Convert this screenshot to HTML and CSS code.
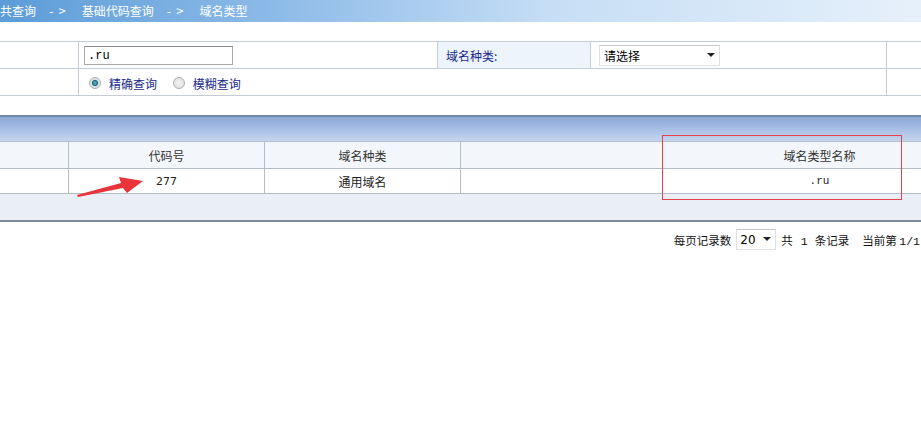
FILE: index.html
```html
<!DOCTYPE html>
<html lang="zh-CN">
<head>
    <meta charset="UTF-8">
    <title>域名类型</title>
    <link rel="stylesheet" href="styles.css">
</head>
<body>
<div class="page">
    <div class="crumb">
        <span>共查询</span><span class="sep">-&gt;</span><span>基础代码查询</span><span class="sep">-&gt;</span><span>域名类型</span>
    </div>

    <table class="search">
        <colgroup>
            <col style="width:79px">
            <col style="width:359px">
            <col style="width:153px">
            <col style="width:296px">
            <col style="width:80px">
        </colgroup>
        <tr>
            <td class="label"></td>
            <td><input type="text" class="text" value=".ru"></td>
            <td class="label name">域名种类:</td>
            <td>
                <span class="sel wide"><select><option>请选择</option></select></span>
            </td>
            <td></td>
        </tr>
        <tr>
            <td class="label"></td>
            <td colspan="3" class="mode">
                <input type="radio" name="mode" class="radio" checked><label>精确查询</label>
                <input type="radio" name="mode" class="radio"><label>模糊查询</label>
            </td>
            <td></td>
        </tr>
    </table>

    <div class="grid">
        <div class="grid-bar"></div>
        <table class="list">
            <colgroup>
                <col style="width:69px">
                <col style="width:196px">
                <col style="width:196px">
                <col style="width:718px">
            </colgroup>
            <tr class="head">
                <td></td>
                <td>代码号</td>
                <td>域名种类</td>
                <td>域名类型名称</td>
            </tr>
            <tr class="row">
                <td></td>
                <td class="num">277</td>
                <td>通用域名</td>
                <td class="mono">.ru</td>
            </tr>
        </table>
        <div class="grid-foot"></div>
    </div>

    <div class="pager">
        <span>每页记录数</span>
        <span class="sel small"><select><option>20</option></select></span>
        <span>共<b class="n wide">1</b>条记录</span>
        <span class="cur">当前第 <b class="n">1/1</b></span>
    </div>

    <div class="mark"></div>
    <svg class="arrow" width="921" height="429" viewBox="0 0 921 429">
        <polygon points="77,195 121,183 119,177 143,181 127,193 123,188 78,197" fill="#e8343a"/>
    </svg>
</div>
</body>
</html>
```

FILE: styles.css
```css
body {
    margin: 0;
    background: #fff;
    font-family: "Noto Sans CJK SC", "DejaVu Sans", sans-serif;
    font-size: 12px;
    color: #333;
}
.page {
    position: relative;
    width: 921px;
    height: 429px;
    overflow: hidden;
}
.crumb {
    height: 22px;
    line-height: 22px;
    color: #fff;
    background: linear-gradient(to right, #5c9cd8 0%, #8dbbe8 30%, #c6def5 60%, #e6f0fa 100%);
    white-space: nowrap;
}
.crumb .sep {
    margin: 0 11px 0 13px;
    letter-spacing: 5px;
    font-size: 13px;
}

.search {
    margin: 19px 0 0 -1px;
    border-collapse: collapse;
    table-layout: fixed;
    width: 967px;
}
.search td {
    border: 1px solid #c4ccd4;
    height: 26px;
    padding: 0 5px;
    white-space: nowrap;
}
.search td.name {
    background: #eef4fc;
    color: #1a2a8a;
    padding-left: 8px;
}
.text {
    width: 149px;
    height: 19px;
    box-sizing: border-box;
    border: 1px solid #a8a8a8;
    border-top-color: #8c8c8c;
    padding: 0 3px;
    font-family: "Liberation Mono", monospace;
    font-size: 12px;
    vertical-align: middle;
}
.sel {
    position: relative;
    display: inline-block;
    vertical-align: middle;
}
.sel select {
    -webkit-appearance: none;
    appearance: none;
    box-sizing: border-box;
    border: 1px solid #e0e0e0;
    border-top-color: #c8c8c8;
    background: #fff;
    font-family: inherit;
    font-size: 12px;
    color: #000;
    padding: 0 4px;
    display: block;
}
.sel::after {
    content: "";
    position: absolute;
    top: 8px;
    right: 5px;
    border-left: 4px solid transparent;
    border-right: 4px solid transparent;
    border-top: 4px solid #222;
}
.sel.wide select {
    width: 121px;
    height: 21px;
}
.sel.wide {
    margin-left: 3px;
}
.sel.small select {
    width: 40px;
    height: 21px;
    font-family: "DejaVu Sans", sans-serif;
    font-size: 12px;
    padding-left: 3px;
}
.mode {
    color: #1a2a8a;
}
.mode label {
    margin-right: 8px;
    vertical-align: middle;
}
.radio {
    -webkit-appearance: none;
    appearance: none;
    width: 12px;
    height: 12px;
    margin: 0 8px 0 5px;
    border-radius: 50%;
    border: 1px solid #a9b0b4;
    background: radial-gradient(circle, #f4f4f4 0, #dcdcdc 100%);
    vertical-align: middle;
}
.radio:checked {
    background: radial-gradient(circle, #6cb6c8 0, #1e6e80 40%, #d8dcde 45%, #eef0f0 100%);
}

.grid {
    margin-top: 19px;
    border-top: 2px solid #6f87a8;
}
.grid-bar {
    height: 24px;
    background: linear-gradient(to bottom, #8ca8d8, #c4d5f0);
}
.list {
    border-collapse: collapse;
    table-layout: fixed;
    width: 1179px;
    margin-left: -1px;
}
.list td {
    border: 1px solid #b4bcc4;
    text-align: center;
    padding: 0;
}
.list .head td {
    height: 26px;
    background: #f3f7fc;
    color: #333;
}
.list .row td {
    height: 24px;
    background: #fff;
    color: #222;
}
.list td.num {
    font-family: "DejaVu Sans", sans-serif;
    font-size: 11px;
}
.list td.mono {
    font-family: "Liberation Mono", monospace;
    font-size: 11px;
}
.grid-foot {
    height: 26px;
    background: #e9eef7;
    border-bottom: 2px solid #7d8a98;
}

.pager {
    display: flex;
    justify-content: flex-end;
    align-items: center;
    gap: 5px;
    margin-top: 7px;
    margin-right: 1px;
    color: #111;
    white-space: nowrap;
    font-size: 11.5px;
}
.pager .n {
    font-family: "Liberation Mono", monospace;
    font-weight: normal;
}
.pager .n.wide {
    margin: 0 7px 0 8px;
}
.pager .cur {
    margin-left: 8px;
}

.mark {
    position: absolute;
    left: 662px;
    top: 135px;
    width: 238px;
    height: 63px;
    border: 1px solid #e6404a;
}
.arrow {
    position: absolute;
    left: 0;
    top: 0;
    pointer-events: none;
}
```
